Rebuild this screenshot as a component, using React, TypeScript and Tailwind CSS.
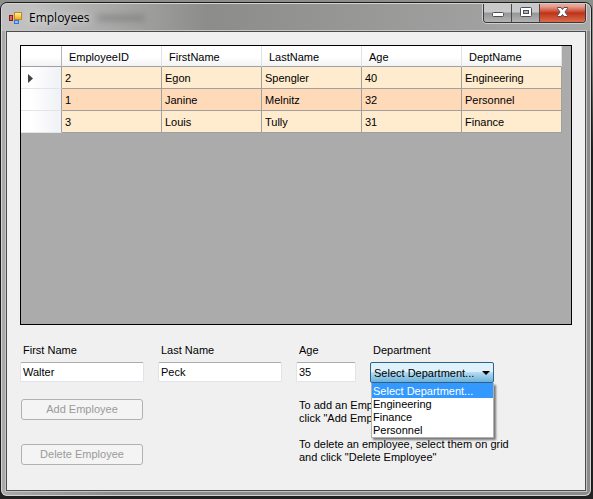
import React from "react";

const columns = ["EmployeeID", "FirstName", "LastName", "Age", "DeptName"];

const employees = [
  ["2", "Egon", "Spengler", "40", "Engineering"],
  ["1", "Janine", "Melnitz", "32", "Personnel"],
  ["3", "Louis", "Tully", "31", "Finance"],
];

const departments = ["Select Department...", "Engineering", "Finance", "Personnel"];

function AppIcon() {
  return (
    <svg width="13" height="13" viewBox="0 0 13 13" aria-hidden="true">
      <defs>
        <linearGradient id="gold" x1="0" y1="0" x2="0" y2="1">
          <stop offset="0" stopColor="#fff3a0" />
          <stop offset="1" stopColor="#f0a818" />
        </linearGradient>
      </defs>
      <rect x="5.5" y="0.5" width="7" height="7" fill="url(#gold)" stroke="#c08a1e" />
      <rect x="0.5" y="3.5" width="3" height="5" fill="#e0655a" stroke="#8e1b14" />
      <rect x="5.5" y="8.5" width="4" height="3" fill="#8cc0ff" stroke="#3c72d8" />
    </svg>
  );
}

const captionClass =
  "flex w-7 items-start justify-center border-r border-[#4a4a4a] bg-linear-to-b from-[#c9c9c9] from-45% via-[#969696] via-50% to-[#b4b4b4]";

function WindowButtons() {
  return (
    <div className="flex h-[19px] overflow-hidden rounded-b-[4px] border border-t-0 border-[#3a3a3a] shadow-[0_0_0_1px_#cfcfcf]">
      <button aria-label="Minimize" className={captionClass}>
        <svg width="12" height="17" viewBox="0 0 12 17">
          <rect x="0.5" y="8.5" width="11" height="4" rx="1" fill="#fff" stroke="#4b4f5c" />
        </svg>
      </button>
      <button aria-label="Maximize" className={captionClass}>
        <svg width="12" height="17" viewBox="0 0 12 17">
          <rect x="0.5" y="3.5" width="11" height="9" rx="1" fill="#fff" stroke="#4b4f5c" />
          <rect x="3.5" y="6.5" width="5" height="3" fill="#b4b4b4" stroke="#4b4f5c" />
        </svg>
      </button>
      <button
        aria-label="Close"
        className="flex w-[45px] items-start justify-center bg-linear-to-b from-[#e8a698] from-10% via-[#bf3218] via-50% to-[#dc6a48]"
      >
        <svg width="12" height="17" viewBox="0 0 12 17">
          <path
            d="M0.5 3.5H4L5.5 5.5L7 3.5H10.5V4.5L8 8L10.5 11.5V12.5H7L5.5 10.5L4 12.5H0.5V11.5L3 8L0.5 4.5Z"
            fill="#fff"
            stroke="#5a4a50"
          />
        </svg>
      </button>
    </div>
  );
}

function EmployeeGrid() {
  return (
    <div className="min-h-[200px] flex-1 overflow-hidden border border-black bg-[#ababab]">
      <table className="w-[541px] table-fixed border-separate border-spacing-0 text-left">
        <colgroup>
          <col className="w-[41px]" />
          {columns.map((c) => (
            <col key={c} className="w-[100px]" />
          ))}
        </colgroup>
        <thead>
          <tr className="h-[21px] bg-linear-to-b from-white from-50% to-[#f0f1f4]">
            <td className="border-r border-b border-[#a0a0a0] border-r-[#b4b4b4] p-0" />
            {columns.map((c) => (
              <th
                key={c}
                scope="col"
                className="border-r border-b border-r-[#e0e2e6] border-b-[#a0a0a0] p-0 pt-[2px] pl-[7px] font-normal"
              >
                {c}
              </th>
            ))}
          </tr>
        </thead>
        <tbody>
          {employees.map((row, i) => (
            <tr key={row[0]} className="h-[22px] bg-[#ffebcd] even:bg-[#ffdab9]">
              <th
                scope="row"
                aria-label={"Employee " + row[0]}
                className="border-r border-b border-r-[#a0a0a0] border-b-[#e3e4e8] bg-linear-to-r from-white from-25% to-[#f0f1f5] p-0 pt-[2px] pl-[7px]"
              >
                {i === 0 && (
                  <svg width="5" height="9" viewBox="0 0 5 9" aria-hidden="true">
                    <path d="M0 0l5 4.5L0 9z" fill="#404040" />
                  </svg>
                )}
              </th>
              {row.map((cell, j) => (
                <td key={j} className="border-r border-b border-[#a0a0a0] p-0 pt-[2px] pl-[3px]">
                  {cell}
                </td>
              ))}
            </tr>
          ))}
        </tbody>
      </table>
    </div>
  );
}

const labelClass = "mb-[5px] block pl-[3px]";

function TextField({ id, label, value }: { id: string; label: string; value: string }) {
  return (
    <div>
      <label htmlFor={id} className={labelClass}>
        {label}
      </label>
      <input
        id={id}
        defaultValue={value}
        className="block h-5 w-full rounded-[2px] border border-[#e2e3ea] border-t-[#abadb3] bg-white px-[2px] outline-none"
      />
    </div>
  );
}

function DepartmentField() {
  return (
    <div className="relative">
      <label htmlFor="department" className={labelClass}>
        Department
      </label>
      <div className="relative">
        <select
          id="department"
          defaultValue={departments[0]}
          className="block h-[21px] w-full appearance-none rounded-[2px] border border-[#2c628b] bg-linear-to-b from-[#dff1fb] from-45% via-[#b4dcf2] via-50% to-[#6bb1d8] px-[3px] pt-[2px] outline-none"
        >
          {departments.map((d) => (
            <option key={d}>{d}</option>
          ))}
        </select>
        <svg
          width="8"
          height="4"
          viewBox="0 0 8 4"
          aria-hidden="true"
          className="pointer-events-none absolute top-[9px] right-1"
        >
          <path d="M0 0h8L4 4z" fill="#000" />
        </svg>
      </div>
      <ul
        role="listbox"
        aria-label="Departments"
        className="absolute top-full right-0 left-px border border-t-0 border-[#b0b0b0] bg-white shadow-[2px_2px_2px_rgba(0,0,0,0.5)]"
      >
        {departments.map((d, i) => (
          <li
            key={d}
            role="option"
            aria-selected={i === 0}
            className="pl-px first:pt-[2px] aria-selected:bg-[#3399ff] aria-selected:text-white"
          >
            {d}
          </li>
        ))}
      </ul>
    </div>
  );
}

const buttonClass =
  "h-[21px] w-full rounded-[3px] border border-[#adb2b5] bg-[#f4f4f4] text-center text-[#9a9a9a]";

export default function App() {
  return (
    <div className="flex min-h-screen flex-col bg-linear-to-b from-[#8b908b] from-10% to-[#222222] to-30% pt-[2px] pr-px pb-[2px] font-['Liberation_Sans',Arial,sans-serif] text-[11px] leading-[13px] text-black">
      <div className="flex flex-1 flex-col overflow-hidden rounded-[7px] border border-[#1c1c1c] bg-linear-to-r from-[#a9aaa9] to-[#8a8c8a] to-20%">
        <header className="flex h-7 items-start justify-between rounded-t-[6px] border border-b-0 border-[#d4d4d4] bg-linear-to-r from-[#c0c0c0] from-5% via-[#8c8d8b] via-35% to-[#a8a8a8] px-1">
          <div className="flex items-center gap-[7px] pt-[6px] pl-[3px]">
            <AppIcon />
            <h1 className="font-['Open_Sans','Noto_Sans',sans-serif] text-[12px] leading-4 text-shadow-[0_0_8px_white]">
              Employees
            </h1>
            <span aria-hidden="true" className="h-[6px] w-12 rounded-full bg-[#6a6c6a]/50 blur-[3px]" />
          </div>
          <WindowButtons />
        </header>
        <div className="flex flex-1 flex-col rounded-b-[6px] border border-t-0 border-[#d4d4d4] px-1 pb-1">
          <main className="flex flex-1 flex-col border border-[#4c4c4c] bg-[#f0f0f0] p-[13px] pb-[25px] shadow-[0_0_0_1px_#c4c4c4]">
            <EmployeeGrid />
            <form>
              <div className="mt-[19px] grid grid-cols-[124px_124px_60px_124px] gap-[14px]">
                <TextField id="first" label="First Name" value="Walter" />
                <TextField id="last" label="Last Name" value="Peck" />
                <TextField id="age" label="Age" value="35" />
                <DepartmentField />
              </div>
              <div className="mt-4 flex justify-start gap-[156px] pl-px">
                <div className="flex w-[122px] shrink-0 flex-col gap-6">
                  <button type="button" disabled className={buttonClass}>
                    Add Employee
                  </button>
                  <button type="button" disabled className={buttonClass}>
                    Delete Employee
                  </button>
                </div>
                <div className="flex flex-col gap-[13px]">
                  <p>
                    To add an Employee, fill in fields and
                    <br />
                    click "Add Employee"
                  </p>
                  <p>
                    To delete an employee, select them on grid
                    <br />
                    and click "Delete Employee"
                  </p>
                </div>
              </div>
            </form>
          </main>
        </div>
      </div>
    </div>
  );
}
